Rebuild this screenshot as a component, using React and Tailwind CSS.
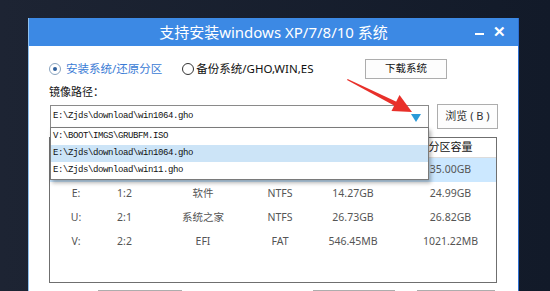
import React from 'react';

const ui = { fontFamily: '"Noto Sans", "Noto Sans CJK SC", sans-serif' };
const mono = { fontFamily: '"Liberation Mono", "Noto Sans CJK SC", monospace' };

const PATHS = [
    'V:\\BOOT\\IMGS\\GRUBFM.ISO',
    'E:\\Zjds\\download\\win1064.gho',
    'E:\\Zjds\\download\\win11.gho',
];

// first row sits under the open list, only the last column shows
const ROWS = [
    { d: '', n: '', l: '', f: '', u: '', t: '35.00GB', sel: true },
    { d: 'E:', n: '1:2', l: '软件', f: 'NTFS', u: '14.27GB', t: '24.99GB' },
    { d: 'U:', n: '2:1', l: '系统之家', f: 'NTFS', u: '26.73GB', t: '26.82GB' },
    { d: 'V:', n: '2:2', l: 'EFI', f: 'FAT', u: '546.45MB', t: '1021.22MB' },
];

const COLS = 'grid grid-cols-[52px_45px_112px_42px_104px_1fr]';

export default function App() {
    return (
        <div className="relative w-[550px] h-[291px] overflow-hidden bg-gradient-to-r from-[#1d2433] to-[#121a29]" style={ui}>
            <div className="ml-[28px] pt-[18px]">
                {/* window */}
                <div className="w-[491px] border-l border-r border-l-[#8ec0ee] border-r-[#2f6fd0]">
                    <div className="relative h-[28px] bg-[#3c89e4] flex items-center justify-center">
                        <span className="text-white text-[15px] leading-none">支持安装windows XP/7/8/10 系统</span>
                        <span className="absolute right-[34px] top-[15px] w-[9px] h-[2px] bg-white" />
                        <span className="absolute right-[12px] top-[6px] text-white text-[15px] font-bold leading-none">✕</span>
                    </div>

                    <div className="bg-white px-[20px] pt-[13px] h-[260px]">
                        {/* mode row */}
                        <div className="flex items-center h-[20px] text-[11.5px]">
                            <span className="w-[12px] h-[12px] rounded-full border border-[#8aa4c0] flex items-center justify-center">
                                <span className="w-[4px] h-[4px] rounded-full bg-[#2f5f9c]" />
                            </span>
                            <span className="ml-[5px] text-[#3a7bd5]">安装系统/还原分区</span>
                            <span className="ml-[20px] w-[12px] h-[12px] rounded-full border border-[#333]" />
                            <span className="ml-[2px] text-[#111]">备份系统/GHO,WIN,ES</span>
                            <button className="ml-auto mr-[51px] w-[82px] h-[20px] border border-[#adadad] bg-[#fdfdfd] text-[10.5px] text-[#111]">下载系统</button>
                        </div>

                        <div className="mt-[6px] text-[11px] leading-[14px] text-[#111]">镜像路径：</div>

                        {/* path row */}
                        <div className="mt-[5px] flex gap-[8px] h-[25px]">
                            <div className="relative ml-[1px] mt-[1px] w-[379px] h-[23px] border border-[#8a8a8a] bg-white flex items-center">
                                <span className="pl-[2px] text-[9px] tracking-[-0.4px] text-[#111]" style={mono}>{PATHS[1]}</span>
                                <span className="absolute right-[7px] top-[8px] w-0 h-0 border-l-[5px] border-r-[5px] border-t-[8px] border-l-transparent border-r-transparent border-t-[#2a9ad8]" />
                                {/* open list */}
                                <div className="absolute left-[-1px] top-full z-10 w-[379px] border border-[#7a7a7a] bg-white shadow-[2px_3px_4px_rgba(0,0,0,0.3)]">
                                    {PATHS.map((p, i) => (
                                        <div key={p} className={`h-[17px] leading-[17px] pl-[2px] text-[9px] tracking-[-0.4px] text-[#111] ${i === 1 ? 'bg-[#cce4f7]' : ''}`} style={mono}>{p}</div>
                                    ))}
                                </div>
                            </div>
                            <button className="w-[61px] h-[25px] border border-[#adadad] bg-[#fdfdfd] text-[11px] text-[#333]">浏览 ( B )</button>
                        </div>

                        {/* partition table */}
                        <div className="mt-[8px] w-[448px] h-[146px] border border-[#6f6f6f]">
                            <div className={`${COLS} h-[20px] items-center border-b border-[#dcdcdc] text-[11px] text-[#111] text-center`}>
                                <span /><span /><span /><span /><span /><span>分区容量</span>
                            </div>
                            {ROWS.map((r, i) => (
                                <div key={i} className={`${COLS} h-[24px] items-center text-center text-[10.5px] text-[#555] ${r.sel ? 'bg-[#cce8ff]' : ''}`}>
                                    <span>{r.d}</span><span>{r.n}</span><span>{r.l}</span><span>{r.f}</span><span>{r.u}</span><span>{r.t}</span>
                                </div>
                            ))}
                        </div>

                        {/* bottom buttons */}
                        <div className="mt-[7px] flex">
                            <button className="ml-[49px] w-[84px] h-[24px] border border-[#adadad]" />
                            <button className="ml-[131px] w-[82px] h-[24px] border border-[#adadad]" />
                            <button className="ml-[22px] w-[78px] h-[24px] border border-[#adadad]" />
                        </div>
                    </div>
                </div>
            </div>

            {/* annotation arrow */}
            <svg className="absolute left-0 top-0 pointer-events-none" width="550" height="291" viewBox="0 0 550 291">
                <polygon points="347,80 347.6,79 397,102 395,106" fill="#e8302a" />
                <polygon points="391.5,111 399.5,95 412,112" fill="#e8302a" />
            </svg>
        </div>
    );
}
